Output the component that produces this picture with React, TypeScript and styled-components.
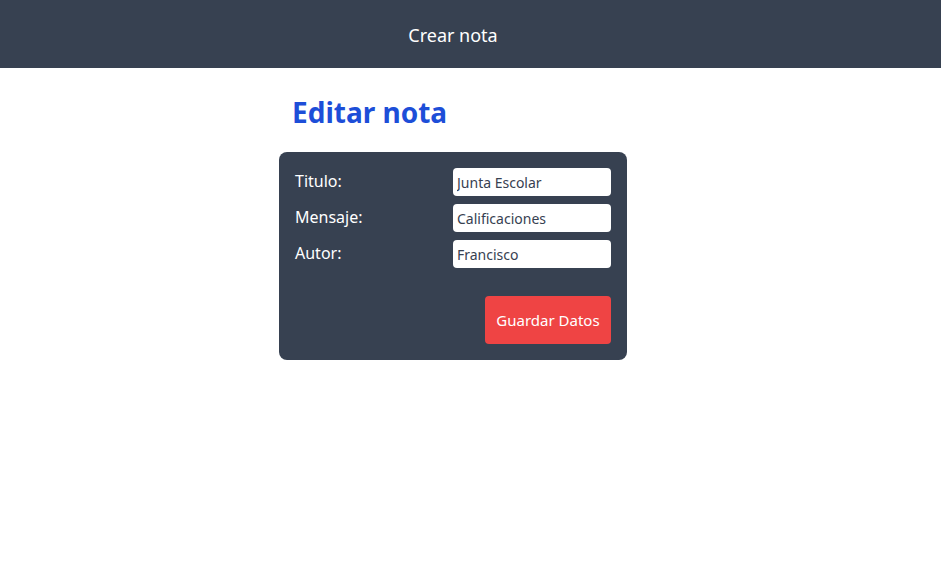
import React from "react";
import styled, { createGlobalStyle } from "styled-components";

const Global = createGlobalStyle`
  html, body { margin: 0; padding: 0; background: #ffffff; }
  body { font-family: "Noto Sans", "Open Sans", sans-serif; }
  * { box-sizing: border-box; }
`;

const Header = styled.header`
  height: 68px;
  background: #374151;
  display: flex;
  align-items: center;
  justify-content: center;
  padding-right: 35px;
`;

const HeaderTitle = styled.span`
  color: #ffffff;
  font-size: 18px;
  line-height: 28px;
  padding-top: 2px;
`;

const Main = styled.main`
  display: flex;
  justify-content: center;
  padding-right: 35px;
  padding-top: 25px;
`;

const Column = styled.div`
  width: 348px;
  display: flex;
  flex-direction: column;
`;

const Title = styled.h1`
  margin: 0 0 21px 13px;
  font-size: 28px;
  line-height: 38px;
  font-weight: 700;
  color: #1d4ed8;
`;

const Card = styled.form`
  background: #374151;
  border-radius: 8px;
  padding: 16px;
  display: flex;
  flex-direction: column;
`;

const Row = styled.label`
  display: flex;
  justify-content: space-between;
  align-items: flex-start;
  margin-bottom: 8px;
`;

const LabelText = styled.span`
  color: #ffffff;
  font-size: 16px;
  line-height: 24px;
  padding-top: 1px;
`;

const Input = styled.input`
  width: 158px;
  height: 28px;
  border: none;
  border-radius: 4px;
  padding: 0 4px;
  font-family: inherit;
  font-size: 14px;
  color: #374151;
  background: #ffffff;
  outline: none;
`;

const Actions = styled.div`
  display: flex;
  justify-content: flex-end;
  margin-top: 20px;
`;

const Button = styled.button`
  height: 48px;
  width: 126px;
  border: none;
  border-radius: 4px;
  background: #ef4444;
  color: #ffffff;
  font-family: inherit;
  font-size: 15px;
  cursor: pointer;
`;

const fields = [
  { label: "Titulo:", value: "Junta Escolar" },
  { label: "Mensaje:", value: "Calificaciones" },
  { label: "Autor:", value: "Francisco" },
];

export default function App() {
  return (
    <>
      <Global />
      <Header>
        <HeaderTitle>Crear nota</HeaderTitle>
      </Header>
      <Main>
        <Column>
          <Title>Editar nota</Title>
          <Card onSubmit={(e) => e.preventDefault()}>
            {fields.map((f) => (
              <Row key={f.label}>
                <LabelText>{f.label}</LabelText>
                <Input defaultValue={f.value} />
              </Row>
            ))}
            <Actions>
              <Button type="submit">Guardar Datos</Button>
            </Actions>
          </Card>
        </Column>
      </Main>
    </>
  );
}
